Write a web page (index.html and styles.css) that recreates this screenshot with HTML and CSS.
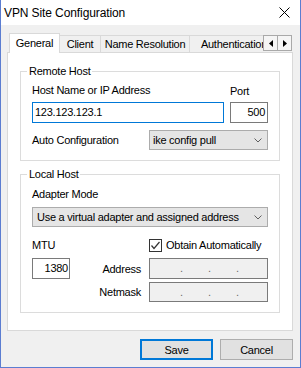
FILE: index.html
```html
<!DOCTYPE html>
<html>
<head>
<meta charset="utf-8">
<link rel="stylesheet" href="styles.css">
</head>
<body>
<div class="window">
  <div class="titlebar">
    <span class="title">VPN Site Configuration</span>
    <svg class="close" width="11" height="11" viewBox="0 0 11 11"><path d="M0.5 0.5 L10.5 10.5 M10.5 0.5 L0.5 10.5" stroke="#000" stroke-width="1" fill="none"/></svg>
  </div>
  <div class="body">
    <div class="tabstrip">
      <div class="tabs">
        <div class="tab active w-general">General</div>
        <div class="tab w-client">Client</div>
        <div class="tab w-name">Name Resolution</div>
        <div class="tab w-auth">Authentication</div>
      </div>
      <div class="tab-scroll">
        <span class="arrow-btn"><svg width="4" height="7" viewBox="0 0 4 7"><polygon points="0,3.5 4,0 4,7" fill="#000"/></svg></span>
        <span class="arrow-btn"><svg width="4" height="7" viewBox="0 0 4 7"><polygon points="4,3.5 0,0 0,7" fill="#000"/></svg></span>
      </div>
    </div>
    <div class="panel">
      <div class="group g1">
        <div class="group-title">Remote Host</div>
        <div class="row label-row">
          <span class="grow">Host Name or IP Address</span>
          <span class="port-label">Port</span>
        </div>
        <div class="row input-row">
          <div class="field host">123.123.123.1</div>
          <div class="field port">500</div>
        </div>
        <div class="row combo-row">
          <span class="grow">Auto Configuration</span>
          <div class="combo small">
            <span class="combo-text">ike config pull</span>
            <svg class="chev" width="8" height="5" viewBox="0 0 8 5"><polyline points="0.5,0.5 4,4 7.5,0.5" fill="none" stroke="#606060" stroke-width="1"/></svg>
          </div>
        </div>
      </div>
      <div class="group g2">
        <div class="group-title">Local Host</div>
        <div class="adapter-label">Adapter Mode</div>
        <div class="combo wide">
          <span class="combo-text">Use a virtual adapter and assigned address</span>
          <svg class="chev" width="8" height="5" viewBox="0 0 8 5"><polyline points="0.5,0.5 4,4 7.5,0.5" fill="none" stroke="#606060" stroke-width="1"/></svg>
        </div>
        <div class="row row-a">
          <span class="col1">MTU</span>
          <label class="check">
            <span class="box"><svg width="11" height="11" viewBox="0 0 11 11"><polyline points="1.5,5.5 4,8.5 9.5,2" fill="none" stroke="#333" stroke-width="1.2"/></svg></span>
            <span>Obtain Automatically</span>
          </label>
        </div>
        <div class="row row-b">
          <div class="col1 split">
            <div class="field mtu">1380</div>
            <span class="side-label">Address</span>
          </div>
          <div class="ip"><span>.</span><span>.</span><span>.</span></div>
        </div>
        <div class="row row-c">
          <span class="col1 side-label">Netmask</span>
          <div class="ip short"><span>.</span><span>.</span><span>.</span></div>
        </div>
      </div>
    </div>
    <div class="buttons">
      <button class="btn default">Save</button>
      <button class="btn">Cancel</button>
    </div>
  </div>
</div>
</body>
</html>
```
FILE: styles.css
```css
html, body {
  margin: 0;
  padding: 0;
}
body {
  font-family: "Liberation Sans", Arial, sans-serif;
  font-size: 11px;
  letter-spacing: -0.25px;
  color: #000;
  background: #fff;
}
.window {
  width: 301px;
  height: 368px;
  box-sizing: border-box;
  border: 1px solid #5b7dd1;
  border-top: 0;
  background: #f0f0f0;
  display: flex;
  flex-direction: column;
}
.titlebar {
  height: 25px;
  flex: none;
  background: #fff;
  display: flex;
  align-items: center;
  justify-content: space-between;
  padding: 0 10px 0 3px;
}
.title {
  font-size: 12px;
  letter-spacing: -0.1px;
}
.close {
  display: block;
}
.body {
  flex: 1;
  display: flex;
  flex-direction: column;
  padding: 8px 7px 7px 6px;
  min-height: 0;
}
.tabstrip {
  display: flex;
  height: 20px;
  flex: none;
  position: relative;
  z-index: 1;
}
.tabs {
  flex: 1;
  display: flex;
  align-items: flex-start;
  overflow: hidden;
  padding-left: 2px;
  min-width: 0;
}
.tab {
  box-sizing: border-box;
  flex: none;
  height: 17px;
  margin-top: 2px;
  border: 1px solid #d9d9d9;
  border-left: 0;
  border-bottom: 0;
  background: #f0f0f0;
  line-height: 16px;
  text-align: center;
  white-space: nowrap;
}
.tab.active {
  height: 20px;
  margin-top: 0;
  border-left: 1px solid #d9d9d9;
  background: #fff;
  line-height: 18px;
}
.w-general { width: 51px; }
.w-client { width: 41px; }
.w-name { width: 89px; }
.w-auth { width: 89px; }
.tab-scroll {
  display: flex;
  align-self: flex-start;
  margin-top: 2px;
  margin-right: 1px;
}
.arrow-btn {
  box-sizing: border-box;
  width: 15px;
  height: 16px;
  border: 1px solid #a9a9a9;
  background: #f5f5f5;
  display: flex;
  align-items: center;
  justify-content: center;
}
.arrow-btn + .arrow-btn {
  border-left: 0;
  width: 14px;
}
.panel {
  flex: 1;
  margin-top: -1px;
  background: #fff;
  border: 1px solid #d9d9d9;
  padding: 0 12px;
  display: flex;
  flex-direction: column;
}
.group {
  border: 1px solid #dcdcdc;
  display: flex;
  flex-direction: column;
  padding: 0 11px 10px;
}
.g1 { margin-top: 18px; }
.g2 { margin-top: 13px; }
.group-title {
  align-self: flex-start;
  margin: -7px 0 0 -5px;
  padding: 0 2px;
  background: #fff;
  line-height: 13px;
}
.row {
  display: flex;
  align-items: center;
}
.grow { flex: 1; }
.label-row {
  margin-top: 6px;
  line-height: 13px;
  align-items: flex-start;
}
.port-label {
  width: 38px;
  margin-top: 1px;
}
.input-row { margin-top: 4px; }
.field {
  box-sizing: border-box;
  height: 21px;
  border: 1px solid #7a7a7a;
  background: #fff;
  line-height: 19px;
  white-space: nowrap;
}
.host {
  width: 192px;
  border-color: #0078d7;
  padding-left: 2px;
}
.port {
  width: 38px;
  margin-left: 6px;
  text-align: right;
  padding-right: 2px;
}
.combo-row { margin-top: 7px; }
.combo {
  box-sizing: border-box;
  height: 20px;
  border: 1px solid #acacac;
  background: #e5e5e5;
  display: flex;
  align-items: center;
  padding-left: 3px;
}
.combo-text {
  flex: 1;
  white-space: nowrap;
}
.chev {
  margin-right: 5px;
  flex: none;
}
.small { width: 119px; }
.adapter-label {
  margin-top: 7px;
  line-height: 13px;
}
.wide {
  margin-top: 6px;
  padding-left: 4px;
}
.row-a {
  margin-top: 12px;
  height: 13px;
  line-height: 13px;
}
.col1 {
  width: 117px;
  flex: none;
}
.check {
  display: flex;
  align-items: center;
}
.box {
  box-sizing: border-box;
  width: 13px;
  height: 13px;
  border: 1px solid #333;
  background: #fff;
  display: flex;
  margin-right: 4px;
}
.box svg { display: block; }
.row-b { margin-top: 6px; }
.split {
  display: flex;
  align-items: center;
}
.mtu {
  width: 38px;
  text-align: right;
  padding-right: 1px;
}
.side-label {
  flex: 1;
  text-align: right;
  padding-right: 8px;
}
.ip {
  box-sizing: border-box;
  width: 119px;
  height: 21px;
  border: 1px solid #7a7a7a;
  background: #f0f0f0;
  display: flex;
  gap: 25px;
  padding-left: 30px;
  line-height: 19px;
  color: #6d6d6d;
}
.ip span {
  width: 3px;
  text-align: center;
}
.ip.short { height: 20px; line-height: 18px; }
.row-c { margin-top: 3px; }
.buttons {
  display: flex;
  justify-content: flex-end;
  gap: 7px;
  margin-top: 8px;
  flex: none;
}
.btn {
  box-sizing: border-box;
  width: 73px;
  height: 21px;
  border: 1px solid #adadad;
  background: #e1e1e1;
  font: inherit;
  letter-spacing: inherit;
  color: #000;
  padding: 0;
}
.btn.default {
  border: 2px solid #0078d7;
}
```
